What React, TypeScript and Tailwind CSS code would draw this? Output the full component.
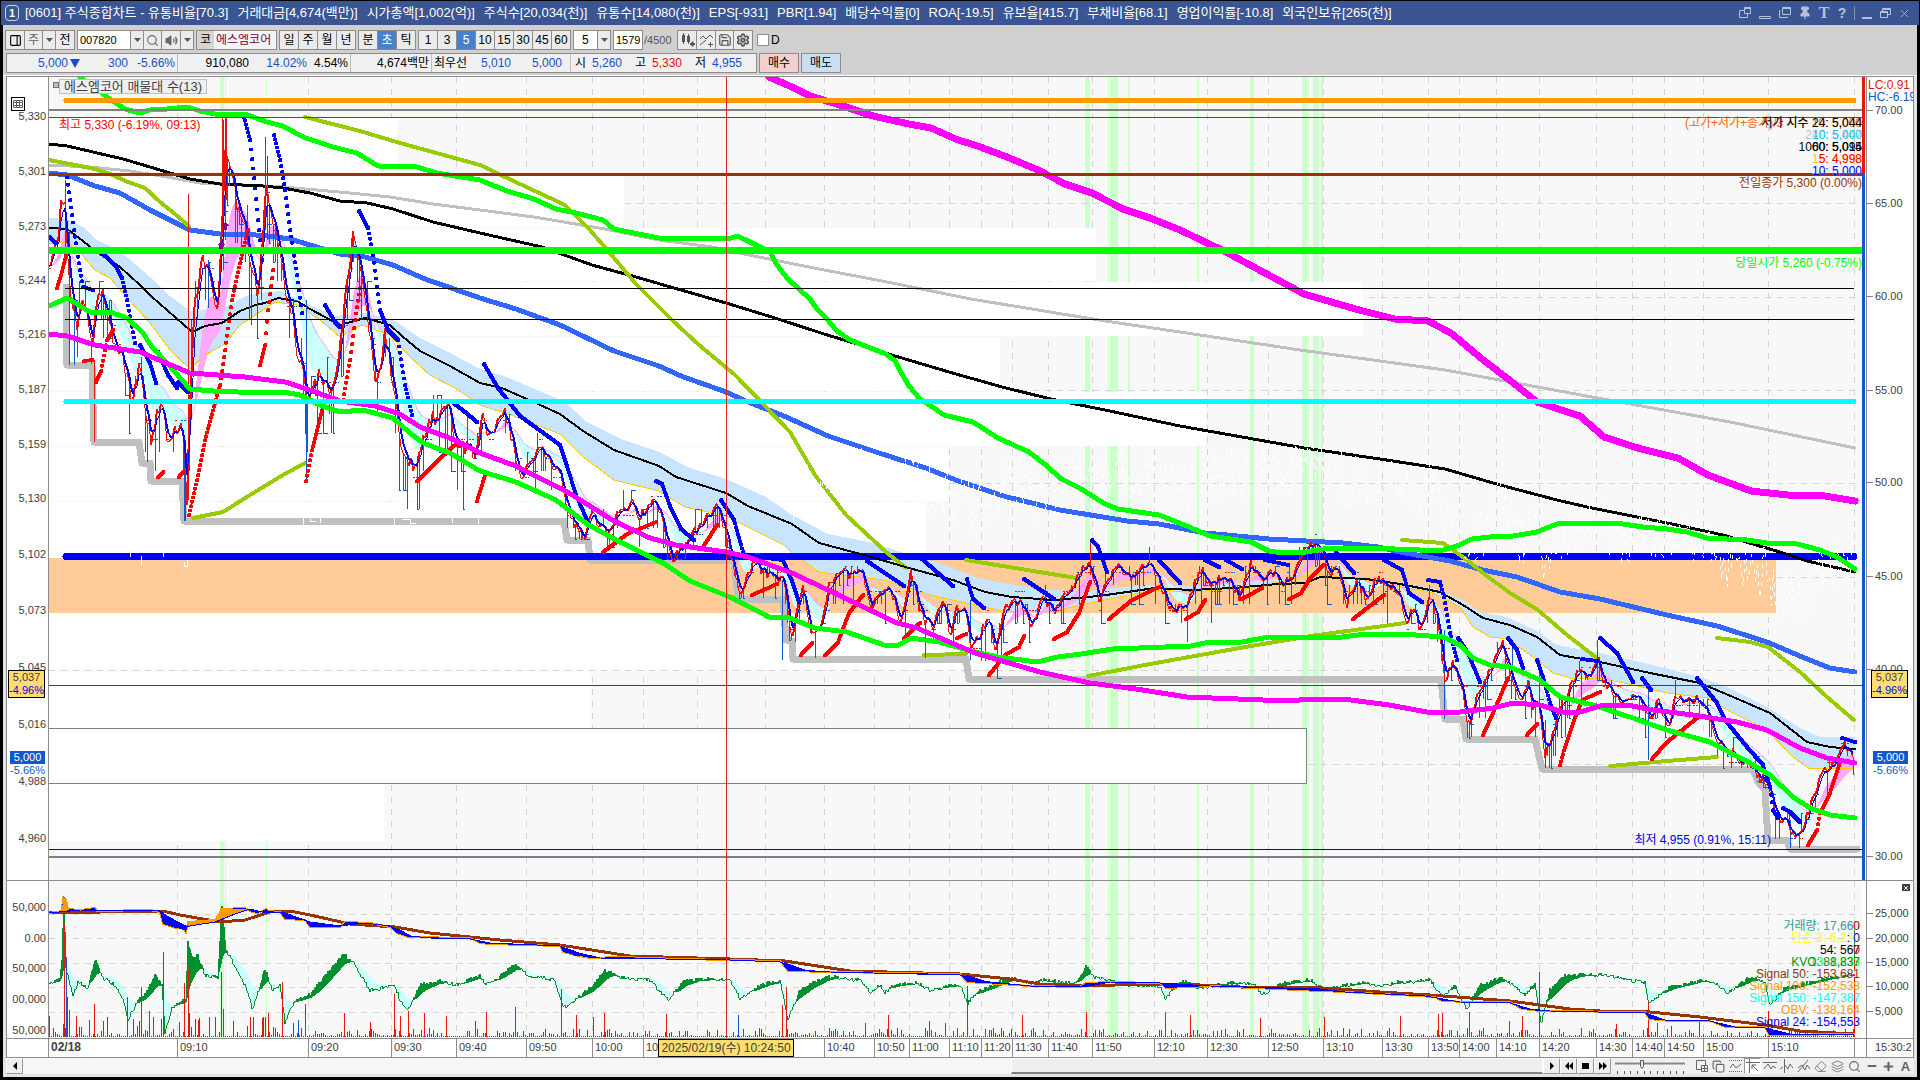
import React from "react";
import {
  Search,
  Volume2,
  Settings,
  Save,
  PanelRight,
  Pin,
  Minus,
  Plus,
  X,
  Copy,
  Layers,
  Eraser,
} from "lucide-react";

type Pt = [number, number];

// chart space: one unit per screen pixel at 1920x1080
const LEFT = 49;
const WIDTH = 1813;
const TOP = 77;
const MAIN_H = 803;
const SUB_TOP = 881;
const SUB_H = 157;

const parse = (s: string): Pt[] =>
  s
    .trim()
    .split(/\s+/)
    .map((p) => p.split(",").map(Number) as Pt);

const lineOf = (pts: Pt[]) => "M" + pts.map((p) => p.join(" ")).join("L");

const interp = (pts: Pt[], x: number) => {
  if (x <= pts[0][0]) return pts[0][1];
  for (let i = 1; i < pts.length; i++) {
    if (x <= pts[i][0]) {
      const [x0, y0] = pts[i - 1];
      const [x1, y1] = pts[i];
      return y0 + ((y1 - y0) * (x - x0)) / (x1 - x0);
    }
  }
  return pts[pts.length - 1][1];
};

const seeded = (seed: number) => () => {
  seed = (seed * 1664525 + 1013904223) % 4294967296;
  return seed / 4294967296;
};

const ema = (pts: Pt[], n: number): Pt[] => {
  const k = 2 / (n + 1);
  let v = pts[0][1];
  return pts.map(([x, y]) => {
    v = v + (y - v) * k;
    return [x, v] as Pt;
  });
};

// area between two series, kept only where a is above b (or below)
const cloud = (a: Pt[], b: Pt[], above: boolean) => {
  let d = "";
  for (let i = 0; i < a.length - 1; i++) {
    const up = a[i][1] < b[i][1];
    if (up !== above) continue;
    d += `M${a[i][0]} ${a[i][1]}L${a[i + 1][0]} ${a[i + 1][1]}L${b[i + 1][0]} ${b[i + 1][1]}L${b[i][0]} ${b[i][1]}Z`;
  }
  return d;
};

const segments = (pts: Pt[], rising: boolean) => {
  let d = "";
  for (let i = 0; i < pts.length - 1; i++) {
    if (pts[i + 1][1] < pts[i][1] !== rising) continue;
    d += `M${pts[i][0]} ${pts[i][1]}L${pts[i + 1][0]} ${pts[i + 1][1]}`;
  }
  return d;
};

const dots = (pts: Pt[]) => {
  let d = "";
  for (let x = pts[0][0]; x <= pts[pts.length - 1][0]; x += 1)
    d += `M${x} ${interp(pts, x).toFixed(1)}h0.1`;
  return d;
};

const GRID_X = [
  177, 308, 391, 456, 526, 592, 643, 697, 765, 824, 874, 909, 949, 981, 1012,
  1048, 1092, 1154, 1207, 1268, 1323, 1382, 1428, 1459, 1496, 1539, 1596, 1632,
  1664, 1703, 1768, 1854,
];
const GRID_Y = [110, 203, 297, 390, 483, 577, 670, 764, 857];
const SUB_GRID_Y = [914, 938, 963, 987, 1012];

const SIGNAL_BANDS: Pt[] = [
  [220, 4], [225, 1], [266, 1], [1085, 5], [1108, 1], [1110, 8], [1128, 2],
  [1197, 2], [1250, 4], [1302, 5], [1308, 1], [1313, 6], [1321, 2],
];

const PROFILE = [
  { y: 118, h: 54, x: 398 },
  { y: 173, h: 54, x: 624 },
  { y: 228, h: 53, x: 1096 },
  { y: 282, h: 54, x: 1363 },
  { y: 337, h: 54, x: 1000 },
  { y: 392, h: 54, x: 1206 },
  { y: 447, h: 54, x: 949 },
  { y: 502, h: 56, x: 926 },
  { y: 613, h: 57, x: 1052 },
  { y: 671, h: 57, x: 591 },
  { y: 784, h: 57, x: 384 },
];

const MAGENTA_TOP = parse(`769,77 792,87 810,96 837,104 873,116 909,124 931,128 958,140 975,145 1007,157 1038,170 1065,184 1092,193 1123,209 1150,218 1180,230 1224,251 1304,294 1359,310 1395,319 1428,321 1451,333 1482,359 1512,382 1537,402 1580,416 1604,437 1641,449 1678,458 1708,475 1751,491 1788,495 1825,496 1855,501`);
const GREEN_TOP = parse(`80,77 102,93 110,99 125,109 140,113 150,110 167,109 188,107 200,111 220,115 245,114 267,122 283,126 303,137 333,147 357,153 378,166 417,167 437,173 480,180 507,191 534,199 556,209 576,213 603,220 614,229 634,233 659,238 728,239 737,236 746,240 770,252 777,265 788,279 810,299 817,309 826,318 837,331 850,340 868,347 886,354 895,361 902,374 909,386 920,399 931,406 944,415 973,422 998,438 1029,452 1047,466 1060,478 1083,490 1105,504 1118,509 1159,515 1187,526 1210,536 1251,542 1269,551 1283,553 1306,552 1329,548 1370,548 1420,550 1443,550 1457,546 1472,539 1490,537 1513,536 1537,532 1557,524 1587,523 1623,524 1643,527 1667,529 1687,532 1707,538 1747,540 1767,543 1797,544 1820,550 1837,557 1855,569`);
const BLACK_TOP = parse(`49,144 67,146 93,152 123,159 150,167 190,179 220,184 263,186 283,188 310,193 340,201 367,203 393,209 433,222 480,233 511,240 542,247 592,265 636,277 681,290 726,303 775,318 824,334 864,346 895,356 949,372 1002,387 1051,399 1105,410 1180,426 1304,448 1380,459 1445,469 1500,485 1557,500 1587,507 1627,515 1667,523 1723,535 1753,544 1783,553 1807,561 1855,572`);
const GRAY_TOP = parse(`49,165 90,167 130,171 167,177 200,183 225,184 283,187 350,193 390,197 433,204 480,210 534,217 605,229 659,240 712,247 739,253 819,269 882,281 971,299 1038,310 1105,321 1180,332 1300,350 1380,361 1445,370 1592,397 1730,422 1855,448`);
const BLUE_MID = parse(`49,173 67,175 95,186 120,193 150,210 170,220 190,230 220,234 245,234 267,236 290,239 320,248 340,254 365,257 393,265 425,279 480,298 516,309 560,325 614,351 659,366 681,376 726,392 748,402 784,416 828,436 882,454 926,468 958,481 1007,497 1060,510 1127,521 1159,524 1205,533 1269,539 1343,543 1378,547 1400,552 1450,561 1483,570 1517,577 1560,592 1600,599 1667,615 1717,626 1767,642 1807,659 1830,668 1855,672`);
const MAGENTA_LOW = parse(`49,334 67,336 95,345 140,352 190,373 245,377 285,382 310,390 340,401 375,406 400,414 420,427 455,440 480,453 516,466 569,493 614,521 650,538 676,545 726,552 748,557 792,573 828,590 897,623 917,628 975,653 1040,672 1090,683 1136,689 1187,697 1288,701 1311,699 1343,699 1389,705 1427,712 1460,712 1493,708 1513,703 1540,705 1563,712 1580,712 1600,706 1627,705 1653,710 1693,715 1737,722 1767,730 1800,748 1827,758 1855,763`);
const GREEN_LOW = parse(`49,306 67,298 90,312 113,313 127,318 143,333 152,347 167,363 190,389 213,391 263,393 283,392 300,395 320,405 340,412 363,410 393,418 410,433 423,443 450,453 480,471 516,482 556,500 587,524 618,541 663,563 690,581 730,597 769,617 787,617 815,628 847,632 884,645 897,646 911,638 939,642 975,652 998,657 1037,662 1058,657 1081,654 1113,649 1191,646 1210,642 1242,642 1269,637 1334,638 1366,634 1402,634 1443,637 1460,645 1473,658 1490,665 1510,667 1540,680 1560,697 1593,705 1633,718 1667,730 1710,742 1750,763 1770,775 1793,797 1810,808 1830,815 1855,818`);
const BAND_UP = parse(`49,218 67,219 83,227 95,239 120,251 150,277 170,296 190,311 225,307 250,294 280,291 305,303 335,316 365,313 395,321 420,338 450,353 480,369 507,377 565,402 587,422 623,440 659,452 690,468 726,479 766,497 792,515 828,534 873,543 900,552 939,563 975,577 1003,583 1040,589 1081,592 1113,588 1150,585 1205,586 1269,580 1315,575 1366,578 1433,588 1463,600 1480,612 1507,617 1537,631 1557,645 1600,653 1640,662 1700,677 1727,687 1767,707 1800,728 1820,737 1855,737`);
const BAND_MID = parse(`49,228 67,229 83,241 95,251 120,267 140,285 152,297 175,317 192,332 205,326 222,323 240,311 255,305 265,303 278,298 297,301 310,309 325,317 340,325 365,318 390,325 402,336 420,351 450,366 480,383 502,388 529,400 560,414 583,431 614,450 659,466 676,477 726,493 748,506 792,524 819,543 864,555 909,568 953,580 985,592 1012,597 1054,600 1099,596 1155,588 1191,590 1233,588 1278,584 1306,583 1320,577 1366,579 1400,584 1440,592 1463,605 1483,618 1510,625 1537,637 1560,655 1600,662 1650,673 1700,683 1733,697 1770,713 1807,742 1830,747 1855,749`);
const BAND_LOW = parse(`49,244 67,242 83,256 95,270 110,278 130,301 150,323 170,350 190,369 205,355 225,344 240,325 260,312 275,302 297,305 320,320 340,337 362,325 390,335 410,357 430,375 455,388 480,405 511,415 560,434 583,457 614,480 659,491 685,507 726,516 784,545 792,553 819,572 884,580 930,595 966,603 1003,611 1049,612 1090,603 1155,590 1191,592 1251,588 1315,574 1366,580 1433,593 1460,607 1473,627 1490,637 1507,639 1533,657 1553,673 1570,678 1600,678 1633,685 1667,693 1707,698 1733,713 1767,730 1793,757 1810,769 1855,768`);
const STEPS = parse(`66,287 67,365 92,365 94,442 139,442 142,463 150,463 151,481 182,481 184,521 564,521 567,540 588,540 590,560 734,560 738,599 783,599 786,640 792,641 793,659 966,659 969,679 1441,679 1445,719 1463,719 1466,739 1535,739 1542,769 1753,769 1758,782 1765,790 1768,840 1787,840 1790,849 1857,849`);

const OLIVE = [
  "49,160 75,165 95,169 110,174 128,182 145,188 160,202 175,214 189,226",
  "193,518 223,512 250,495 283,475 305,463",
  "305,117 360,131 400,143 480,165 507,178 565,205 589,229 603,245 636,284 672,320 699,345 734,374 766,407 790,432 815,475 846,515 886,552 906,568",
  "924,655 966,654",
  "966,560 1021,569 1076,578",
  "1088,676 1150,664 1251,646 1311,636 1405,623",
  "1402,540 1443,543 1467,560 1483,573 1510,593 1538,610 1567,635 1598,659",
  "1610,766 1667,761 1717,757",
  "1717,638 1750,642 1768,647 1800,672 1827,697 1854,720",
].map(parse);

const SAR_DOWN = [
  "49,237 56,243",
  "67,177 70,200 74,230 80,270 83,287 93,290",
  "104,255 115,265 122,278 127,300 135,343",
  "140,345 150,363 156,383",
  "158,352 168,375 177,388",
  "178,382 188,392",
  "244,117 250,140 254,178 258,220 262,260",
  "274,135 280,160 285,190 290,230 297,275 302,313",
  "325,305 335,322 340,327",
  "359,211 368,228 373,255 380,310 388,330 398,340 405,385 412,415",
  "452,402 465,412 477,422",
  "484,364 498,388 520,416 560,445 567,466 576,495 587,520",
  "656,481 662,484 670,506 681,529 694,540",
  "721,500 734,520 743,552",
  "748,556 783,560 792,581 799,602",
  "867,561 904,586",
  "922,559 953,586",
  "967,579 973,599 984,608",
  "1024,579 1054,599",
  "1092,540 1098,547 1107,572",
  "1159,560 1180,583",
  "1205,560 1219,567",
  "1226,560 1242,569",
  "1265,560 1288,565",
  "1336,552 1354,573",
  "1384,560 1402,570 1409,593 1422,602",
  "1428,580 1440,582 1444,597 1450,633 1457,660",
  "1458,638 1468,653 1480,682",
  "1508,638 1517,650 1523,668",
  "1537,660 1543,677 1550,703 1556,718",
  "1582,659 1597,661",
  "1600,638 1617,653 1633,682",
  "1642,678 1651,690",
  "1697,678 1717,703 1725,720 1747,747 1763,765 1770,787 1773,810 1778,818",
  "1783,808 1790,812 1800,822",
  "1842,738 1855,742",
].map(parse);

const SAR_UP = [
  "57,288 61,275 66,255",
  "84,361 92,360",
  "96,382 101,371 107,340 113,330",
  "158,477 163,472",
  "179,477 184,471",
  "189,515 197,480 205,440 215,403 220,385 225,350 232,300 240,263 248,230",
  "260,365 265,345 268,310 273,270",
  "306,481 312,450 322,410",
  "343,400 350,360 355,320 360,288",
  "417,481 435,463 455,445",
  "477,501 482,485 485,475",
  "603,552 627,534 656,522",
  "703,547 717,525",
  "752,595 777,584",
  "801,655 812,643",
  "825,655 838,642 849,613 863,595",
  "904,638 920,623",
  "957,638 966,634",
  "989,675 1005,655 1019,647 1024,636",
  "1054,639 1067,632 1079,613 1090,582",
  "1109,619 1132,600 1159,587",
  "1186,619 1198,612 1205,600",
  "1242,599 1262,588",
  "1289,599 1301,593 1311,577 1323,565",
  "1353,619 1384,595",
  "1483,735 1493,713 1500,697 1508,678",
  "1527,735 1537,724",
  "1560,765 1565,747 1573,723 1582,700 1600,692",
  "1652,759 1667,742 1697,718",
  "1808,845 1817,830 1820,813 1830,793 1840,762",
].map(parse);

const PRICE_KEYS = parse(`49,270 53,257 58,245 62,195 65,200 68,257 72,300 77,330 82,303 88,317 93,343 98,300 102,290 108,317 113,343 123,360 130,387 133,400 140,363 147,423 152,440 158,407 163,413 167,440 172,433 180,425 185,453 187,500 189,437 192,353 195,303 202,263 207,260 213,297 218,303 222,237 225,150 230,167 237,203 247,237 252,270 258,297 263,237 266,170 270,203 280,257 287,303 293,310 297,353 302,370 307,403 312,397 318,373 325,380 333,393 338,363 345,303 353,237 360,270 368,320 375,380 382,370 385,330 395,397 400,440 405,457 415,468 422,440 432,417 440,420 448,405 457,443 467,447 477,453 482,413 489,438 505,409 520,477 534,456 542,449 560,474 567,509 583,540 592,516 609,531 618,513 632,502 638,520 656,499 672,559 690,538 717,506 726,531 741,597 753,563 769,575 783,580 792,637 803,587 812,633 820,630 829,587 840,567 849,577 863,573 870,610 888,583 902,623 911,573 920,613 933,630 944,597 950,633 957,610 966,610 971,650 980,633 989,620 996,650 1005,607 1021,600 1031,630 1042,600 1054,610 1070,590 1079,573 1090,560 1099,600 1116,563 1129,578 1148,562 1159,580 1171,610 1189,603 1200,568 1210,583 1228,577 1239,597 1251,562 1265,580 1272,573 1283,585 1297,570 1308,545 1320,545 1329,577 1338,567 1347,603 1357,580 1366,597 1377,580 1398,590 1407,620 1413,607 1420,630 1430,597 1438,617 1445,680 1453,660 1462,687 1468,730 1477,697 1483,683 1502,640 1510,670 1522,702 1528,680 1533,710 1538,697 1545,757 1553,733 1563,700 1573,683 1580,667 1587,683 1599,660 1603,683 1613,690 1623,703 1637,693 1650,720 1658,700 1668,730 1675,700 1697,700 1710,717 1722,750 1727,747 1737,758 1747,760 1760,777 1768,783 1777,817 1787,820 1795,837 1800,833 1808,813 1815,790 1823,773 1837,760 1845,743 1853,760`);

const rnd = seeded(7820);
const price: Pt[] = [];
for (let x = LEFT; x <= 1854; x += 2)
  price.push([x, Math.round(interp(PRICE_KEYS, x) + (rnd() - 0.5) * (x < 480 ? 16 : 11))]);
const smooth = ema(price, 3);
const cloudA = ema(price, 10);
const cloudB = ema(price, 26);

let upWicks = "M65 180V215M94 360V442M188 194V500M191 320V420M222 117V235M225 117V240M226 117V200M265 137V230M251 280V325M318 117V117M1090 541V575M1597 640V670M1539 660V700";
let downWicks = "M69 230V365M74 300V365M223 120V270M267 156V240M184 440V521M208 260V308M306 300V481M185 440V521M1444 630V719M1545 720V768M1790 820V848M782 580V660M970 600V660M1648 690V760M1512 640V680";
for (let i = 4; i < price.length; i++) {
  const [x, y] = price[i];
  const r = rnd();
  if (r > 0.5) continue;
  const len = x < 480 ? 26 : 12;
  const down = rnd() > 0.4;
  let end = down ? y + len * 0.5 + rnd() * len * 1.6 : y - len * 0.4 - rnd() * len;
  end = Math.min(Math.ceil(end / 19) * 19 - 4, interp(STEPS, x) - 1);
  if (r > 0.22) upWicks += `M${x + 0.5} ${y}V${Math.round(end)}`;
  else downWicks += `M${x + 0.5} ${y}V${Math.round(end)}h${rnd() > 0.6 ? 4 : 1}`;
}
const ticks = (phase: number) =>
  price
    .filter((_, i) => i % 7 === phase)
    .map(([x, y]) => `M${x} ${Math.ceil((y - 12) / 19) * 19 + 2.5}h${2 + Math.round(rnd() * 4)}`)
    .join("");
const upTicks = ticks(0);
const downTicks = ticks(3);
const ghost: Pt[] = price
  .filter(([x]) => x > 740)
  .map(([x, y]) => [x + 0.5, Math.max(447, 470 + (y - 570) * 0.5 + (rnd() - 0.5) * 60)]);

const BROWN = parse(`49,912 100,912 163,911 180,915 220,922 245,920 270,912 290,911 310,915 350,924 395,927 430,933 500,940 560,945 630,956 730,959 785,961 850,971 960,974 1010,979 1040,984 1090,986 1140,984 1180,984 1240,987 1323,988 1380,992 1430,995 1510,1001 1570,1009 1600,1011 1650,1012 1700,1017 1765,1025 1800,1031 1854,1034`);
const OBV_SIGNAL = parse(`49,913 80,910 160,911 170,918 186,926 190,926 215,922 235,914 250,909 262,912 285,913 310,922 340,926 365,923 390,926 410,936 430,938 470,939 490,943 560,946 570,951 600,958 730,960 780,962 800,970 830,972 960,975 980,981 1000,983 1040,987 1090,986 1110,982 1160,983 1210,986 1320,989 1345,992 1425,996 1460,1002 1510,1003 1530,1009 1550,1011 1645,1013 1665,1020 1710,1021 1735,1027 1765,1028 1790,1034 1854,1034`);
const OBV = parse(`49,913 62,911 63,898 66,900 68,909 80,910 95,908 97,911 150,910 160,912 163,924 176,928 184,928 186,933 188,922 215,920 220,919 221,909 245,908 252,912 258,913 266,909 268,911 280,912 285,919 305,920 310,927 340,927 345,922 370,923 390,927 397,933 408,937 470,938 480,943 490,944 560,946 563,952 575,955 590,958 620,957 680,959 780,961 784,966 788,971 830,972 960,974 967,982 1000,984 1030,986 1080,987 1086,983 1110,982 1160,983 1166,988 1210,986 1320,991 1345,992 1400,995 1435,997 1442,1001 1470,1002 1510,1002 1522,1009 1540,1011 1645,1012 1649,1019 1670,1021 1710,1021 1725,1027 1765,1027 1769,1035 1854,1034`);
const KVO_KEYS = parse(`49,983 60,980 62,960 64,895 66,970 73,994 78,982 88,988 95,960 104,978 117,987 125,1005 128,1020 138,1000 145,995 155,975 162,985 165,1034 172,1008 183,1000 186,1000 188,943 192,957 198,955 205,975 218,978 222,907 226,950 232,960 245,985 253,1010 265,968 272,990 280,985 285,1022 295,1000 310,995 330,970 344,954 355,965 370,990 395,985 400,1000 408,1010 420,985 440,980 455,985 480,975 485,985 495,980 515,965 530,976 555,980 563,1008 575,1000 590,988 605,970 620,977 650,980 668,1000 685,980 700,979 730,980 740,998 760,985 780,980 788,1020 800,990 825,977 835,977 860,980 870,992 880,985 885,992 895,985 915,982 930,990 950,986 960,985 968,1003 980,990 1010,978 1030,983 1045,980 1075,984 1086,966 1095,978 1130,985 1160,986 1166,999 1175,985 1185,981 1200,988 1230,983 1255,985 1263,995 1280,983 1310,980 1325,990 1360,982 1382,986 1400,982 1430,980 1443,998 1455,985 1467,1010 1480,985 1500,978 1515,985 1525,995 1535,982 1541,1024 1550,990 1565,975 1600,975 1620,978 1645,982 1649,1003 1670,987 1700,981 1715,983 1728,993 1750,977 1765,982 1770,1005 1785,988 1820,980 1852,974 1854,975`);
const kvo: Pt[] = [];
for (let x = LEFT; x <= 1854; x += 1)
  kvo.push([x, Math.round(interp(KVO_KEYS, x) + (rnd() - 0.5) * 4)]);
const kvoSignal = ema(kvo, 22);

const VOLUME_PEAKS: Pt[] = [
  [64, 113], [69, 27], [76, 21], [94, 33], [103, 16], [127, 40], [141, 50],
  [149, 26], [163, 85], [184, 54], [188, 68], [198, 17], [221, 65], [223, 28],
  [250, 20], [262, 19], [268, 24], [282, 55], [305, 33], [344, 24], [370, 15],
  [394, 43], [400, 21], [408, 26], [424, 24], [446, 21], [475, 16], [486, 25],
  [515, 30], [561, 48], [576, 22], [593, 20], [604, 24], [666, 23], [782, 32],
  [786, 50], [865, 14], [888, 22], [929, 16], [945, 14], [967, 51], [1022, 22],
  [1086, 25], [1165, 25], [1190, 22], [1260, 19], [1324, 20], [1400, 21],
  [1438, 23], [1442, 24], [1469, 25], [1509, 16], [1522, 21], [1539, 65],
  [1616, 13], [1648, 35], [1657, 14], [1671, 11], [1699, 16], [1768, 26],
  [1854, 80],
];
let volUp = VOLUME_PEAKS.map(([x, h]) => `M${x}.5 1037v-${h}`).join("");
let volDown = "M66.5 1037v-80M67.5 1037v-40M189.5 1037v-24M298.5 1037v-17M738.5 1037v-22M1467 1037v-9";
for (let x = LEFT; x < 1854; x += 2) {
  const base = x < 300 ? 10 : 4;
  const h = Math.round(1 + Math.pow(rnd(), 4) * base * 2);
  if (rnd() > 0.5) volUp += `M${x}.5 1037v-${h}`;
  else volDown += `M${x}.5 1037v-${h}`;
}

const PRICE_LABELS: [string, number][] = [
  ["5,330", 116], ["5,301", 171], ["5,273", 226], ["5,244", 280],
  ["5,216", 334], ["5,187", 389], ["5,159", 444], ["5,130", 499],
  ["5,102", 555], ["5,073", 611], ["5,045", 668], ["5,016", 725],
  ["4,988", 782], ["4,960", 839],
];
const RATE_LABELS: [string, number][] = [
  ["70.00", 110], ["65.00", 203], ["60.00", 296], ["55.00", 390],
  ["50.00", 483], ["45.00", 577], ["40.00", 670], ["30.00", 857],
];
const SUB_LEFT: [string, number][] = [
  ["50,000", 907], ["0.00", 938], ["50,000", 969], ["00,000", 1000], ["50,000", 1031],
];
const SUB_RIGHT: [string, number][] = [
  ["25,000", 913], ["20,000", 938], ["15,000", 963], ["10,000", 987], ["5,000", 1012],
];
const TIMES: [string, number][] = [
  ["09:10", 177], ["09:20", 308], ["09:30", 391], ["09:40", 456],
  ["09:50", 526], ["10:00", 592], ["10", 643], ["10:40", 824],
  ["10:50", 874], ["11:00", 909], ["11:10", 949], ["11:20", 981],
  ["11:30", 1012], ["11:40", 1048], ["11:50", 1092], ["12:10", 1154],
  ["12:30", 1207], ["12:50", 1268], ["13:10", 1323], ["13:30", 1382],
  ["13:50", 1428], ["14:00", 1459], ["14:10", 1496], ["14:20", 1539],
  ["14:30", 1596], ["14:40", 1632], ["14:50", 1664], ["15:00", 1703],
  ["15:10", 1768],
];

const TITLE = [
  "[0601] 주식종합차트 - 유통비율[70.3]",
  "거래대금[4,674(백만)]",
  "시가총액[1,002(억)]",
  "주식수[20,034(천)]",
  "유통수[14,080(천)]",
  "EPS[-931]",
  "PBR[1.94]",
  "배당수익률[0]",
  "ROA[-19.5]",
  "유보율[415.7]",
  "부채비율[68.1]",
  "영업이익률[-10.8]",
  "외국인보유[265(천)]",
];

const mainTop = (y: number) => ({ top: `${((y - TOP) / (MAIN_H + 1)) * 100}%` });
const subTop = (y: number) => ({ top: `${((y - SUB_TOP) / (SUB_H + 1)) * 100}%` });
const timeLeft = (x: number) => ({ left: `${((x - LEFT) / WIDTH) * 100}%` });

function Grid({ top, height, rows }: { top: number; height: number; rows: number[] }) {
  return (
    <>
      {SIGNAL_BANDS.map(([x, w]) => (
        <rect key={x} x={x} y={top} width={w} height={height} fill="#ccffcc" />
      ))}
      <path
        d={
          GRID_X.map((x) => `M${x + 0.5} ${top}v${height}`).join("") +
          rows.map((y) => `M${LEFT} ${y + 0.5}h${WIDTH}`).join("")
        }
        stroke="#d4d4d4"
        strokeDasharray="6 6"
      />
    </>
  );
}

function Line({ pts, color, w }: { pts: Pt[]; color: string; w: number }) {
  return (
    <path d={lineOf(pts)} fill="none" stroke={color} strokeWidth={w} strokeLinejoin="round" strokeLinecap="round" />
  );
}

function MainPlot() {
  return (
    <svg
      viewBox={`${LEFT} ${TOP} ${WIDTH} ${MAIN_H}`}
      preserveAspectRatio="none"
      shapeRendering="crispEdges"
      className="block h-full w-full"
    >
      <Grid top={TOP} height={MAIN_H} rows={GRID_Y} />
      {PROFILE.map((b) => (
        <rect key={b.y} x={LEFT} y={b.y} width={b.x - LEFT} height={b.h} fill="#ffffff" />
      ))}
      <rect x={LEFT} y={558} width={1727} height={55} fill="#ffcc99" />
      <rect x={48} y={728.5} width={1258} height={55} fill="#ffffff" stroke="#808080" />

      <path d={lineOf(BAND_UP) + "L" + lineOf([...BAND_LOW].reverse()).slice(1) + "Z"} fill="#c8e4ff" />
      <path d={cloud(cloudA, cloudB, false)} fill="#ccffff" />
      <path d={cloud(cloudA, cloudB, true)} fill="#ffaaff" />
      <Line pts={cloudB} color="#ffb3f0" w={1} />
      <Line pts={BAND_LOW} color="#ffcc00" w={1} />
      <Line pts={STEPS} color="#c0c0c0" w={7} />
      <path d="M66 556.5H1854" stroke="#0000ff" strokeWidth={7} strokeLinecap="round" />
      <Line pts={GRAY_TOP} color="#c0c0c0" w={3} />
      <Line pts={BLACK_TOP} color="#000000" w={3} />
      <Line pts={BLUE_MID} color="#3366ff" w={5} />
      {OLIVE.map((o, i) => (
        <Line key={i} pts={o} color="#99cc00" w={4} />
      ))}
      <path d={lineOf(ghost)} fill="none" stroke="#ffffff" strokeDasharray="4 5" />
      <path
        d="M130 553v4M141 556v10M163 553v4M184 562v4h3v-6M303 517v8M310 517v4h6M320 517v6M394 517v8M402 519h8v4h6M452 517v6M478 517v7"
        fill="none"
        stroke="#ffffff"
      />
      <Line pts={BAND_MID} color="#000000" w={2} />

      <path d={downWicks} fill="none" stroke="#1158cc" />
      <path d={upWicks} fill="none" stroke="#e6170c" />
      <path d={upTicks} stroke="#e6170c" strokeDasharray="2 1" />
      <path d={downTicks} stroke="#1158cc" strokeDasharray="2 1" />
      <path d={segments(price, true)} stroke="#ff0000" strokeWidth={2} />
      <path d={segments(price, false)} stroke="#e6170c" />
      <path d={lineOf(smooth)} fill="none" stroke="#0000d8" />
      <path d={segments(smooth, false)} stroke="#0000ff" strokeWidth={2} />
      {SAR_DOWN.map((s, i) => (
        <path key={i} d={dots(s)} stroke="#0000ff" strokeWidth={4} strokeLinecap="round" />
      ))}
      {SAR_UP.map((s, i) => (
        <path key={i} d={dots(s)} stroke="#ff0000" strokeWidth={4} strokeLinecap="round" />
      ))}

      <Line pts={GREEN_LOW} color="#00ff00" w={5} />
      <Line pts={MAGENTA_LOW} color="#ff00ff" w={5} />
      <Line pts={GREEN_TOP} color="#00ff00" w={5} />
      <Line pts={MAGENTA_TOP} color="#ff00ff" w={7} />

      <path d="M66 100.5H1854" stroke="#ff9900" strokeWidth={5} strokeLinecap="round" />
      <path d="M49 110H1862" stroke="#808080" strokeWidth={2} />
      <path d="M49 117.5H1862" stroke="#ff0000" />
      <path d="M49 174.5H1862" stroke="#993300" strokeWidth={3} />
      <path d="M49 250.5H1862" stroke="#00ff00" strokeWidth={7} />
      <path d="M65 288.5H1854M65 319.5H1854" stroke="#000000" />
      <path d="M66 401.5H1854" stroke="#00ffff" strokeWidth={5} strokeLinecap="round" />
      <path d="M49 849.5H1862" stroke="#0000e0" />
      <path d="M49 857H1862" stroke="#808080" strokeWidth={2} />
      <path d="M221 241l4 4h-2v4h-4v-4h-2zM225 222l4 4h-2v4h-4v-4h-2z" fill="#800080" />
      <path d="M726.5 77V880" stroke="#dd2222" />
      <path d="M49 685.5H1862" stroke="#dd0000" />
    </svg>
  );
}

function SubPlot() {
  return (
    <svg
      viewBox={`${LEFT} ${SUB_TOP} ${WIDTH} ${SUB_H}`}
      preserveAspectRatio="none"
      shapeRendering="crispEdges"
      className="block h-full w-full"
    >
      <Grid top={SUB_TOP} height={SUB_H} rows={SUB_GRID_Y} />
      <path d={cloud(kvo, kvoSignal, false)} fill="#ccffff" />
      <path d={cloud(kvo, kvoSignal, true)} fill="#009030" />
      <Line pts={kvo} color="#009030" w={1} />
      <path d={volDown} stroke="#1158cc" />
      <path d={volUp} stroke="#e6170c" />
      <path d="M1854.5 958V930" stroke="#009030" />
      <Line pts={BROWN} color="#993300" w={3} />
      <path
        d={lineOf(BROWN) + "L" + lineOf([...OBV].reverse().filter(([x]) => x > 245)).slice(1) + "Z"}
        fill="none"
      />
      <Line pts={OBV} color="#ff9900" w={2} />
      <path
        d={lineOf(OBV_SIGNAL) + "L" + lineOf([...OBV].reverse()).slice(1) + "Z"}
        fill="#0000ff"
      />
      <path
        d="M163 913L186 926V931L163 923ZM397 928L412 936L397 932ZM561 946L592 957L575 956L563 950ZM784 962L806 970L788 971ZM967 975L985 981L968 982Z"
        fill="#0000ff"
      />
      <path
        d="M188 926V922L215 919L221 909H245L250 909L235 914L215 922ZM62 912L63 898L66 900L69 910Z"
        fill="#ff9900"
      />
      <Line pts={OBV_SIGNAL} color="#0000ff" w={1} />
      <path d="M726.5 881V1038" stroke="#dd2222" />
    </svg>
  );
}

function TitleBar() {
  return (
    <header className="flex h-6 shrink-0 items-center bg-[#3a5592] pl-1 pr-2 text-[13px] text-white">
      <span className="mr-1.5 flex h-4 w-[14px] items-center justify-center rounded-sm border border-[#c9d4ee] text-[11px] font-bold">
        1
      </span>
      <h1 className="flex min-w-0 flex-1 gap-[9px] overflow-hidden whitespace-nowrap">
        {TITLE.map((t) => (
          <span key={t}>{t}</span>
        ))}
      </h1>
      <div className="flex items-center gap-1.5 text-[#b4c0de]">
        <button aria-label="분리">
          <svg width="14" height="14" fill="none" stroke="currentColor">
            <path d="M6.5 4.5h-5v7h8v-4M6.5 1.5h6v6h-6zM6.500 2.500h6" />
          </svg>
        </button>
        <button aria-label="접기">
          <svg width="14" height="14" fill="none" stroke="currentColor">
            <path d="M1.5 10.5h11v2h-11z" />
          </svg>
        </button>
        <button aria-label="복제">
          <svg width="14" height="14" fill="none" stroke="currentColor">
            <path d="M4.5 1.5h8v7h-8zM4.500 2.500h8M2.5 4.5h-1v7h8v-1" />
          </svg>
        </button>
        <button aria-label="고정">
          <Pin size={14} fill="currentColor" />
        </button>
        <button aria-label="글꼴" className="w-3 font-['Liberation_Serif',serif] text-[16px] font-bold leading-none">
          T
        </button>
        <button aria-label="도움말" className="w-3 text-[14px] font-bold leading-none">
          ?
        </button>
        <span className="h-3.5 w-px bg-[#8090a8]" />
        <button aria-label="최소화">
          <svg width="12" height="14">
            <path d="M1 11h10v2H1z" fill="currentColor" />
          </svg>
        </button>
        <button aria-label="이전 크기로">
          <svg width="13" height="14" fill="none" stroke="currentColor">
            <path d="M3.5 5.5v-3h8v6h-3M1.5 5.5h7v6h-7zM1 6.5h7M4 3.500h7" />
          </svg>
        </button>
        <button aria-label="닫기">
          <X size={13} strokeWidth={1.5} />
        </button>
      </div>
    </header>
  );
}

const BTN = "-ml-px flex h-5 items-center justify-center border border-[#8c8c8c]";
const FACE = "bg-[#ebebeb]";

function Group({ items, active }: { items: string[]; active?: string }) {
  return (
    <div className="ml-0.5 flex pl-px">
      {items.map((t) => (
        <button key={t} className={`${BTN} w-5 ${t === active ? "bg-[#4a80c8] text-white" : FACE}`}>
          {t}
        </button>
      ))}
    </div>
  );
}

function DropButton({ label }: { label: string }) {
  return (
    <button aria-label={label} className={`${BTN} ${FACE} w-[14px]`}>
      <svg width="7" height="4" fill="#555">
        <path d="M0 0h7L3.500 4z" />
      </svg>
    </button>
  );
}

function Toolbar() {
  return (
    <div className="flex h-5 items-center text-[12px] leading-none">
      <button aria-label="패널" className={`${BTN} ${FACE} w-5`}>
        <PanelRight size={13} />
      </button>
      <button className={`${BTN} ${FACE} w-[19px] text-[#666]`}>주</button>
      <DropButton label="주기 선택" />
      <button className={`${BTN} ${FACE} w-5`}>전</button>
      <input
        aria-label="종목코드"
        defaultValue="007820"
        className="ml-0.5 h-5 w-[54px] border border-[#8c8c8c] bg-white pl-0.5 text-[11px]"
      />
      <DropButton label="종목 목록" />
      <button aria-label="종목 검색" className={`${BTN} ${FACE} w-[19px] text-[#666]`}>
        <Search size={13} />
      </button>
      <button aria-label="소리" className={`${BTN} ${FACE} w-5 text-[#666]`}>
        <Volume2 size={13} fill="currentColor" />
      </button>
      <DropButton label="소리 설정" />
      <span className="ml-0.5 flex h-5 items-center border border-[#8c8c8c] bg-[#f4f4f4]">
        <b className="flex h-full w-[17px] items-center justify-center bg-[#d4d4d4] font-normal">코</b>
        <span className="w-[62px] overflow-hidden whitespace-nowrap pl-0.5 text-[#800040]">에스엠코어</span>
      </span>
      <Group items={["일", "주", "월", "년"]} />
      <Group items={["분", "초", "틱"]} active="초" />
      <Group items={["1", "3", "5", "10", "15", "30", "45", "60"]} active="5" />
      <select
        aria-label="주기"
        defaultValue="5"
        className="ml-0.5 h-5 w-[25px] appearance-none border border-[#8c8c8c] bg-white pl-2"
      >
        <option>5</option>
      </select>
      <DropButton label="주기 목록" />
      <input
        aria-label="조회 건수"
        defaultValue="1579"
        className="ml-0.5 h-5 w-[30px] border border-[#8c8c8c] bg-white pl-0.5 text-[11px]"
      />
      <span className="w-[35px] pl-px text-[11px] text-[#555]">/4500</span>
      <button aria-label="지표 추가" className={`${BTN} ${FACE} w-5 text-[#555]`}>
        <svg width="15" height="15" fill="currentColor">
          <path d="M2 2h3v7H2zM3 0h1v11H3zM7 3h3v6H7zM8 1h1v10H8zM10 10h5v2h-5zM11.5 8.500h2v5h-2z" />
        </svg>
      </button>
      <button aria-label="선 추가" className={`${BTN} ${FACE} w-5 text-[#555]`}>
        <svg width="15" height="15" fill="none" stroke="currentColor">
          <path d="M1 6l3-3 3 3 4-4 3 3M1 12l6-5M9 11.500h5M11.500 9v5" />
        </svg>
      </button>
      <button aria-label="저장" className={`${BTN} ${FACE} w-[19px] text-[#555]`}>
        <Save size={14} />
      </button>
      <button aria-label="설정" className={`${BTN} ${FACE} w-5 text-[#555]`}>
        <Settings size={14} strokeWidth={3} />
      </button>
      <label className="ml-1 flex items-center gap-0.5">
        <input type="checkbox" className="h-3 w-3 appearance-none border border-[#8c8c8c] bg-white" />
        D
      </label>
    </div>
  );
}

function QuoteBar() {
  return (
    <div className="flex h-5 items-center gap-0.5 text-[12px]">
      <dl className="flex h-full w-[751px] items-center border border-[#8c8c8c] bg-[#f0f0f0] text-right text-[#1450c8]">
        <dd className="flex w-[73px] items-center justify-end gap-0.5">
          5,000
          <svg width="10" height="9" fill="#1450c8">
            <path d="M0 0h10L5 9z" />
          </svg>
        </dd>
        <dd className="w-12">300</dd>
        <dd className="w-[49px] pr-0.5">-5.66%</dd>
        <dd className="w-[72px] border-l border-[#c0c0c0] text-black">910,080</dd>
        <dd className="w-[58px]">14.02%</dd>
        <dd className="w-[43px] pr-0.5 text-black">4.54%</dd>
        <dd className="w-[81px] border-l border-[#c0c0c0] pr-0.5 text-black">4,674백만</dd>
        <dt className="w-[39px] border-l border-[#c0c0c0] pl-0.5 text-left text-black">최우선</dt>
        <dd className="w-[41px]">5,010</dd>
        <dd className="w-[51px]">5,000</dd>
        <dt className="ml-2 w-4 border-l border-[#c0c0c0] text-black">시</dt>
        <dd className="w-9">5,260</dd>
        <dt className="w-6 text-black">고</dt>
        <dd className="w-9 text-[#e01010]">5,330</dd>
        <dt className="w-6 text-black">저</dt>
        <dd className="w-9">4,955</dd>
      </dl>
      <button className="h-5 w-10 border border-[#8c8c8c] bg-[#f5d0cc]">매수</button>
      <button className="h-5 w-10 border border-[#8c8c8c] bg-[#c8dff5]">매도</button>
    </div>
  );
}

function AxisLabels({
  labels,
  top,
  side,
}: {
  labels: [string, number][];
  top: (y: number) => { top: string };
  side: "left" | "right";
}) {
  return (
    <>
      {labels.map(([t, y]) => (
        <span
          key={y}
          style={top(y)}
          className={`absolute -translate-y-1/2 leading-none ${side === "left" ? "right-0.5" : "left-2"}`}
        >
          {t}
        </span>
      ))}
      {side === "right" &&
        labels.map(([, y]) => (
          <i key={y} style={top(y)} className="absolute left-0 h-px w-1.5 bg-[#808080]" />
        ))}
    </>
  );
}

function Stack({ rows }: { rows: [string, string][][] }) {
  return (
    <>
      {rows.map((row, i) => (
        <div key={i} className="relative h-3">
          {row.map(([text, cls]) => (
            <span key={text} className={`absolute right-0 top-0 whitespace-nowrap ${cls}`}>
              {text}
            </span>
          ))}
        </div>
      ))}
    </>
  );
}

function PriceTag() {
  return (
    <>
      <div style={mainTop(671)} className="absolute left-px w-[37px] border border-black bg-[#ffdd70] text-center leading-[13px]">
        <div>5,037</div>
        <div className="text-[#0000e0]">-4.96%</div>
      </div>
      <div style={mainTop(752)} className="absolute left-[3px] w-[35px] overflow-hidden text-center leading-[13px]">
        <div className="bg-[#1158cc] text-white">5,000</div>
        <div className="leading-3 text-[#1158cc]">-5.66%</div>
      </div>
    </>
  );
}

function Chart() {
  return (
    <main className="mx-[3px] grid min-h-0 flex-1 grid-cols-[42px_1fr_51px] grid-rows-[804fr_158fr_18px] border border-[#8c8c8c] bg-white text-[11px] text-[#404040]">
      <div className="relative overflow-hidden border-b border-r border-[#8c8c8c]">
        <button aria-label="데이터 표" className="absolute left-1 top-5 h-[14px] w-[14px] border border-black bg-white">
          <svg width="12" height="12" fill="none" stroke="#666">
            <path d="M1.500 2.500h9v7h-9zM1.500 4.500h9M4.500 2.500v7M7.500 2.500v7M1.500 7.500h9" />
          </svg>
        </button>
        <AxisLabels labels={PRICE_LABELS} top={mainTop} side="left" />
        <PriceTag />
      </div>
      <div className="relative min-h-0 overflow-hidden border-b border-[#8c8c8c] bg-[#f8f8f8] text-[12px]">
        <MainPlot />
        <span className="absolute left-1 top-[5px] h-1.5 w-1.5 border border-[#777] bg-[#bbb]" />
        <span className="absolute left-2.5 top-0.5 h-[15px] whitespace-nowrap border border-[#c0c0c0] bg-[#f0f0f0] px-1 text-[13px] leading-[13px]">
          에스엠코어 매물대 수(13)
        </span>
        <span style={mainTop(119)} className="absolute left-2.5 leading-3 text-[#ff0000]">
          최고 5,330 (-6.19%, 09:13)
        </span>
        <div style={mainTop(117)} className="absolute right-0 w-44 leading-3">
          <Stack
            rows={[
              [
                ["(고가+저가+종가)/3 지수 10: 5,000", "text-[#ff6600]"],
                ["저가 지수 24: 5,044", "text-black"],
              ],
              [["240: 5,447", "text-[#c0c0c0]"], ["10: 5,000", "text-[#00c8ff]"]],
              [["1000: 5,094", "text-black"], ["60: 5,015", "text-black"]],
              [["15: 4,998", "text-[#ffcc00]"], ["5: 4,998", "text-[#ff0000]"]],
              [["30: 5,000", "text-[#ccf2ff]"], ["10: 5,000", "text-[#0000ff]"]],
            ]}
          />
        </div>
        <span style={mainTop(177)} className="absolute right-0 leading-3 text-[#993300]">
          전일종가 5,300 (0.00%)
        </span>
        <span style={mainTop(257)} className="absolute right-0 leading-3 text-[#00ff00]">
          당일시가 5,260 (-0.75%)
        </span>
        <span style={mainTop(835)} className="absolute right-[91px] leading-3 text-[#0000e0]">
          최저 4,955 (0.91%, 15:11)
        </span>
      </div>
      <div className="relative overflow-hidden border-b border-[#8c8c8c]">
        <div className="absolute inset-y-0 left-0 flex w-[3px] flex-col">
          <i className="h-[97px] bg-[#e6170c]" />
          <i className="flex-1 bg-[#1158cc]" />
        </div>
        <div className="absolute inset-y-0 left-1 right-0 border-l border-[#8c8c8c]">
          <div className="absolute left-px top-0.5 text-[12px] leading-3">
            <div className="text-[#e6170c]">LC:0.91</div>
            <div className="text-[#1158cc]">HC:-6.19</div>
          </div>
          <AxisLabels labels={RATE_LABELS} top={mainTop} side="right" />
          <div className="absolute inset-y-0 left-[3px] w-10">
            <PriceTag />
          </div>
        </div>
      </div>

      <div className="relative overflow-hidden border-b border-r border-[#8c8c8c]">
        <AxisLabels labels={SUB_LEFT} top={subTop} side="left" />
      </div>
      <div className="relative min-h-0 overflow-hidden border-b border-[#8c8c8c] bg-[#f8f8f8] text-[12px]">
        <SubPlot />
        <div style={subTop(920)} className="absolute right-0.5 w-44 leading-3">
          <Stack
            rows={[
              [["거래량: 17,660", "text-[#339999]"], ["0", "text-[#ff0000]"]],
              [["단순 3: 6,220", "text-[#ffff00]"], [": 0", "text-[#0000ff]"]],
              [["54: 567", "text-black"], ["0", "text-[#e00020]"]],
              [["13: 1,233", "text-[#00ff00]"], ["KVO: 88,837", "text-[#009030]"]],
              [["KVO signal: 60,229", "text-[#ccffff]"], ["Signal 50: -153,681", "text-[#993300]"]],
              [["Signal 100: -152,538", "text-[#ff9900]"]],
              [["Signal 150: -147,387", "text-[#00ffff]"]],
              [["OBV: -138,164", "text-[#ff9900]"]],
              [["Signal 24: -154,553", "text-[#0000ff]"]],
            ]}
          />
        </div>
      </div>
      <div className="relative overflow-hidden border-b border-[#8c8c8c]">
        <div className="absolute inset-y-0 left-1 right-0 border-l border-[#8c8c8c]">
          <AxisLabels labels={SUB_RIGHT} top={subTop} side="right" />
          <button aria-label="지표 닫기" className="absolute right-[3px] top-[3px] flex h-[7px] w-2 items-center justify-center bg-[#404040] text-white">
            <X size={6} strokeWidth={4} />
          </button>
        </div>
      </div>

      <div className="border-r border-[#8c8c8c]" />
      <div className="relative overflow-hidden">
        <b className="absolute left-0.5 top-0.5 text-[12px] leading-3">02/18</b>
        {TIMES.map(([t, x]) => (
          <span key={x} style={timeLeft(x)} className="absolute top-0 h-full whitespace-nowrap border-l border-[#8c8c8c] pl-0.5 leading-4">
            {t}
          </span>
        ))}
        <span style={timeLeft(1854)} className="absolute top-0 h-full border-l border-[#8c8c8c]" />
        <span
          style={timeLeft(658)}
          className="absolute top-0 flex h-full w-[136px] items-center justify-center whitespace-nowrap border border-black bg-[#ffdd70] text-[12px]"
        >
          2025/02/19(수) 10:24:50
        </span>
      </div>
      <div className="ml-1 overflow-hidden whitespace-nowrap border-l border-[#8c8c8c] pl-2 leading-4">15:30:2</div>
    </main>
  );
}

const TOOL = "flex h-4 w-[17px] items-center justify-center text-[#666]";
const PLAY = "flex h-4 w-[17px] items-center justify-center border border-[#999] border-l-white border-t-white bg-[#efefef]";

function Footer() {
  return (
    <footer className="mx-[3px] mb-[3px] flex h-4 shrink-0 items-center bg-[#f0f0f0]">
      <button aria-label="왼쪽으로" className={PLAY}>
        <svg width="6" height="8"><path d="M5 0v8L1 4z" /></svg>
      </button>
      <div className="flex h-full min-w-0 flex-1 bg-[#f6f6f6]">
        <div className="w-[65%]" />
        <div className="flex-1 border border-b-2 border-white border-b-[#808080] bg-[#efefef]" />
      </div>
      <button aria-label="재생" className={PLAY}>
        <svg width="8" height="8"><path d="M2 0v8l4-4z" /></svg>
      </button>
      <button aria-label="뒤로" className={PLAY}>
        <svg width="10" height="8"><path d="M5 0v8L1 4zM9 0v8L5 4z" /></svg>
      </button>
      <button aria-label="정지" className={PLAY}>
        <svg width="8" height="8"><path d="M0 1h7v6H0z" /></svg>
      </button>
      <button aria-label="앞으로" className={PLAY}>
        <svg width="10" height="8"><path d="M1 0v8l4-4zM5 0v8l4-4z" /></svg>
      </button>
      <div className="relative mx-1 h-4 w-[70px]">
        <svg width="70" height="16" stroke="#555">
          <path d="M0 5.500h70" stroke="#888" strokeWidth="2" />
          <path d="M2.500 13v3M9.500 13v3M15.500 13v3M22.500 13v3M29.500 13v3M35.500 13v3M42.500 13v3M48.500 13v3M55.500 13v3M61.500 13v3M68.500 13v3" />
          <path d="M25.500 2.500h3v6l-1.500 2-1.500-2z" fill="#efefef" />
        </svg>
        <input aria-label="재생 속도" type="range" className="absolute inset-0 w-full opacity-0" />
      </div>
      <div className="ml-1 flex">
        <button aria-label="창 추가" className={TOOL}>
          <svg width="14" height="14" fill="none" stroke="currentColor"><path d="M6 10.500H1.500v-9h9V6M6.500 6.500h6v6h-6zM9.500 7v6M7 9.500h6" /></svg>
        </button>
        <button aria-label="창 복사" className={TOOL}><Copy size={13} /></button>
        <button aria-label="영역" className={TOOL}>
          <svg width="14" height="14" fill="none" stroke="currentColor"><path d="M0 1.500h14M0 12.500h14" strokeDasharray="1 1" /><path d="M1 9l3-4 3 4 5-4" /></svg>
        </button>
        <button aria-label="십자선" className={`${TOOL} border border-[#999] border-b-white border-r-white bg-white`}>
          <svg width="14" height="14" fill="none" stroke="currentColor"><path d="M3.500 0v14M0 3.500h14M6 6l6 6M6 10V6h4" /></svg>
        </button>
        <button aria-label="수평선" className={TOOL}>
          <svg width="14" height="14" fill="none" stroke="currentColor"><path d="M0 3.500h14M1 10l4-5 3 5 2-3 3 2" /></svg>
        </button>
        <button aria-label="수직선" className={TOOL}>
          <svg width="14" height="14" fill="none" stroke="currentColor"><path d="M4.500 0v14M0 10l3-2M5 6l3 4 2-5 3 4" /></svg>
        </button>
        <button aria-label="추세선" className={TOOL}>
          <svg width="14" height="14" fill="none" stroke="currentColor"><path d="M1 13L11 1M1 9l4-3 3 5 2-5 3 4" /></svg>
        </button>
        <button aria-label="지우기" className={TOOL}><Eraser size={13} strokeWidth={1.5} /></button>
        <button aria-label="겹쳐보기" className={TOOL}><Layers size={13} strokeWidth={1.5} /></button>
        <button aria-label="돋보기" className={TOOL}><Search size={13} /></button>
        <button aria-label="축소" className={TOOL}><Minus size={12} strokeWidth={4} /></button>
        <button aria-label="확대" className={TOOL}><Plus size={13} strokeWidth={4} /></button>
        <button aria-label="자동" className={`${TOOL} text-[13px] font-bold leading-none`}>A</button>
      </div>
    </footer>
  );
}

export default function App() {
  return (
    <div className="flex h-screen flex-col overflow-hidden bg-black pb-[3px] pl-px pr-px pt-px font-['Liberation_Sans','Noto_Sans_CJK_KR',sans-serif] text-black">
      <TitleBar />
      <div className="ml-0.5 mr-0.5 flex min-h-0 flex-1 flex-col bg-[#e4e4e4]">
        <div className="flex h-[51px] shrink-0 flex-col gap-[3px] border-b border-white bg-[#d0d0d0] pl-[3px] pt-[5px]">
          <Toolbar />
          <QuoteBar />
        </div>
        <Chart />
        <Footer />
      </div>
    </div>
  );
}
